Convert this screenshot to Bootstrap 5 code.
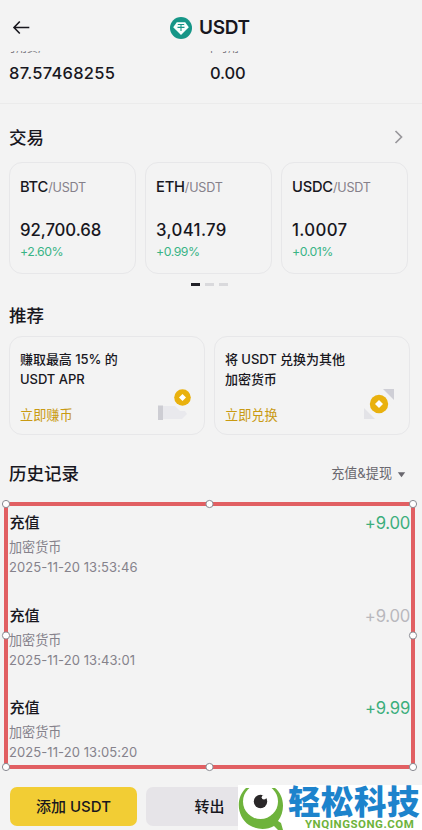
<!DOCTYPE html>
<html lang="zh-CN">
<head>
<meta charset="utf-8">
<meta name="viewport" content="width=device-width, initial-scale=1">
<title>USDT</title>
<link href="https://cdn.jsdelivr.net/npm/bootstrap@5.3.0/dist/css/bootstrap.min.css" rel="stylesheet">
<style>
  body { font-family: Inter, "Noto Sans CJK SC", sans-serif; background: #f3f3f3; color: #18171e; width: 422px; height: 830px; overflow: hidden; }
  svg { display: block; flex: none; }
  .topbar { height: 51px; padding: 4px 0 0 12px; }
  .coin-title { font-size: 19px; font-weight: 600; letter-spacing: -.3px; margin-left: 7px; line-height: 24px; padding-top: 1px; }
  .coin-name { margin-left: 139px; }
  .peek { height: 3px; overflow: hidden; font-size: 11px; color: #77757c; }
  .peek span { width: 201px; line-height: 12px; margin-top: -9px; padding-left: 5px; }
  .balances { height: 50px; border-bottom: 1px solid #ebebeb; padding: 7px 0 0 9px; font-size: 16.5px; font-weight: 500; letter-spacing: .25px; }
  .balances span { width: 201px; line-height: 24px; }
  .balances span + span { letter-spacing: -.1px; }
  .sect { font-size: 17.5px; font-weight: 500; line-height: 28px; padding-left: 9px; }
  .sect-trade { height: 58px; padding-top: 20px; padding-right: 17px; }
  .tiles { padding-left: 9px; gap: 9px; }
  .tile { border: 1px solid #e7e7e9; border-radius: 13px; padding-left: 10px; }
  .pair-tile { width: 127px; height: 112px; padding-top: 14px; }
  .pair { font-size: 14.7px; font-weight: 500; line-height: 20px; white-space: nowrap; letter-spacing: -.2px; }
  .pair span { font-size: 12.6px; font-weight: 400; color: #85808a; }
  .price { font-size: 16.8px; font-weight: 500; line-height: 24px; margin-top: 20px; letter-spacing: -.1px; }
  .price-wide { letter-spacing: .35px; }
  .gain { font-size: 12.3px; line-height: 18px; color: #39b486; margin-top: 1px; letter-spacing: -.45px; }
  .pager { height: 28px; padding: 9px 4px 0 0; gap: 5px; }
  .pager i { width: 9px; height: 3px; background: #d9d9dc; }
  .pager i.on { background: #202027; }
  .sect-rec { height: 34px; }
  .rec { width: 196px; height: 99px; padding-top: 12px; }
  .rec p { font-size: 13px; font-weight: 500; line-height: 20px; margin: 0; letter-spacing: -.05px; }
  .rec a { display: block; font-size: 13.2px; line-height: 20px; margin-top: 16px; color: #c99a12; text-decoration: none; }
  .rec svg { position: absolute; right: 10px; top: 49px; }
  .rec .earn { right: 9px; }
  .sect-hist { height: 66px; padding-top: 25px; }
  .filter { font-size: 13.1px; font-weight: 400; color: #69676e; gap: 5px; padding-right: 16px; line-height: 26px; }
  .history { height: 286px; padding: 10px 12px 0 10px; }
  .entry { height: 92.7px; }
  .entry b { font-size: 15.1px; font-weight: 500; line-height: 24px; margin-left: -.5px; }
  .entry em { font-style: normal; font-size: 16.7px; line-height: 25px; color: #3cae7c; letter-spacing: -.25px; }
  .entry em.off { color: #b9b8bd; }
  .entry small { display: block; font-size: 13px; line-height: 20px; color: #85828b; margin-left: -1px; }
  .entry .crypto { font-size: 13.1px; margin-top: 1px; }
  .entry .stamp { letter-spacing: .08px; }
  .selection { position: absolute; left: 0; top: 498px; }
  .actions { padding-left: 10px; gap: 9px; }
  .act { width: 127px; height: 39px; padding: 1px 0 0; border: 0; border-radius: 7px; font-size: 15px; font-weight: 500; color: #18171e; }
  .act-add { background: #f2cd34; }
  .act-out { background: #e6e4e8; }
  .brand { position: absolute; left: 238px; top: 785px; width: 184px; height: 45px; background: #fff; }
  .brand-text { padding-left: 3px; white-space: nowrap; }
  .brand-cn { font: 900 32.5px/32px "Noto Sans CJK SC", sans-serif; color: #1d83cc; height: 32px; letter-spacing: .5px; margin-top: -1px; }
  .brand-url { font: 700 11.5px/12px Roboto, sans-serif; color: #6eb33c; padding: 2px 0 0 17px; letter-spacing: .5px; }
</style>
</head>
<body class="position-relative">
<header class="topbar d-flex align-items-center">
  <svg width="19" height="18" viewBox="0 0 19 18" fill="none" stroke="#18171e" stroke-width="1.6"><path d="M17.300 8.500H2M7.800 2.500 2 8.500l5.800 6"/></svg>
  <div class="coin-name d-flex align-items-center">
    <svg width="22" height="22" viewBox="0 0 22 22"><circle cx="11" cy="11" r="11" fill="#159687"/><path d="M6.800 5.300h8.400l3.600 5-7.800 7.700-7.800-7.700z" fill="#f7fffd"/><path d="M7.800 7.500h6.400M11 7.500v6.500M7.500 10.400h7" fill="none" stroke="#159687" stroke-width="1.1"/></svg>
    <span class="coin-title">USDT</span>
  </div>
</header>
<div class="peek d-flex"><span>可用资产</span><span>不可用</span></div>
<section class="balances d-flex"><span>87.57468255</span><span>0.00</span></section>

<div class="sect sect-trade d-flex justify-content-between"><span>交易</span>
  <svg class="mt-1" width="12" height="18" viewBox="0 0 12 18" fill="none" stroke="#98979b" stroke-width="1.7"><path d="m2.500 3 6 6-6 6"/></svg>
</div>
<div class="tiles d-flex">
  <div class="tile pair-tile"><div class="pair">BTC<span>/USDT</span></div><div class="price">92,700.68</div><div class="gain">+2.60%</div></div>
  <div class="tile pair-tile"><div class="pair">ETH<span>/USDT</span></div><div class="price price-wide">3,041.79</div><div class="gain">+0.99%</div></div>
  <div class="tile pair-tile"><div class="pair">USDC<span>/USDT</span></div><div class="price price-wide">1.0007</div><div class="gain">+0.01%</div></div>
</div>
<div class="pager d-flex justify-content-center"><i class="on"></i><i></i><i></i></div>

<div class="sect sect-rec">推荐</div>
<div class="tiles d-flex">
  <div class="tile rec position-relative"><p>赚取最高 15% 的<br>USDT APR</p><a href="#">立即赚币</a>
    <svg class="earn" width="38" height="38" viewBox="0 0 38 38"><path d="M5 20h13l5 5h5l2 3-5 5H5z" fill="#e9e9ed"/><path d="M1 19.500h5V34H1z" fill="#cdcdd3"/><circle cx="25.500" cy="11.500" r="8.300" fill="#e9b10e"/><path d="m25.500 8 3.500 3.500-3.500 3.500-3.500-3.500z" fill="#fff"/></svg>
  </div>
  <div class="tile rec position-relative"><p>将 USDT 兑换为其他<br>加密货币</p><a href="#">立即兑换</a>
    <svg width="38" height="38" viewBox="0 0 38 38"><path d="M22 3h11v11z" fill="#cfcfd6"/><path d="M3 22v11h11z" fill="#e3e3e7"/><circle cx="18" cy="18" r="12" fill="#f3f3f3"/><circle cx="18" cy="18" r="9.200" fill="#e9b10e"/><path d="m18 14 4 4-4 4-4-4z" fill="#fff"/></svg>
  </div>
</div>

<div class="sect sect-hist d-flex justify-content-between"><span>历史记录</span>
  <span class="filter d-flex align-items-center align-self-start">充值&amp;提现<svg class="mt-1" width="9" height="6" viewBox="0 0 9 6"><path d="M.8.3h7.400L4.500 5.300z" fill="#69676e"/></svg></span>
</div>
<section class="history">
  <div class="entry"><div class="d-flex justify-content-between"><b>充值</b><em>+9.00</em></div><small class="crypto">加密货币</small><small class="stamp">2025-11-20 13:53:46</small></div>
  <div class="entry"><div class="d-flex justify-content-between"><b>充值</b><em class="off">+9.00</em></div><small class="crypto">加密货币</small><small class="stamp">2025-11-20 13:43:01</small></div>
  <div class="entry"><div class="d-flex justify-content-between"><b>充值</b><em>+9.99</em></div><small class="crypto">加密货币</small><small class="stamp">2025-11-20 13:05:20</small></div>
</section>
<svg class="selection" width="422" height="275" viewBox="0 0 422 275"><rect x="6" y="6" width="407" height="263" fill="none" stroke="#e15f62" stroke-width="4"/><g fill="#fff" stroke="#898a91" stroke-width="1"><circle cx="6" cy="6" r="3.600"/><circle cx="209.500" cy="6" r="3.600"/><circle cx="413" cy="6" r="3.600"/><circle cx="6" cy="137.500" r="3.600"/><circle cx="413" cy="137.500" r="3.600"/><circle cx="6" cy="269" r="3.600"/><circle cx="209.500" cy="269" r="3.600"/><circle cx="413" cy="269" r="3.600"/></g></svg>

<footer class="actions d-flex"><button class="btn act act-add">添加 USDT</button><button class="btn act act-out">转出</button></footer>

<div class="brand d-flex">
  <svg width="47" height="45" viewBox="0 0 47 45"><path d="M8 3C-3 13-1 32 11 40c8 5 18 5 25 1l4 4h5l-2-7-3-2c8-11 6-26-3-33z" fill="#6eb33c"/><circle cx="22.500" cy="16.500" r="17.500" fill="#fff"/><circle cx="22.500" cy="16.500" r="6.700" fill="#2a2829"/><circle cx="26" cy="12.300" r="2.300" fill="#fff"/></svg>
  <div class="brand-text"><div class="brand-cn">轻松科技</div><div class="brand-url">YNQINGSONG.COM</div></div>
</div>
<script src="https://cdn.jsdelivr.net/npm/bootstrap@5.3.0/dist/js/bootstrap.bundle.min.js"></script>
</body>
</html>
